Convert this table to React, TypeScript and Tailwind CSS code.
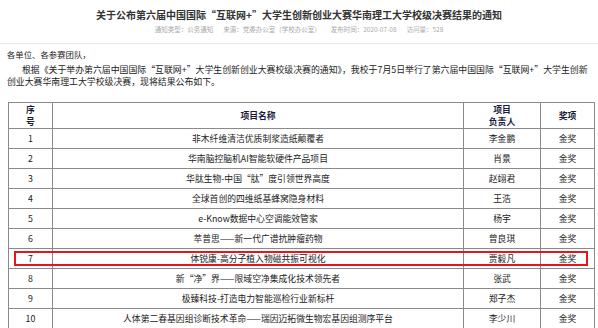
const rows = [
  { no: "1", name: "非木纤维清洁优质制浆造纸颠覆者", lead: "李金鹏", award: "金奖" },
  { no: "2", name: "华南脑控脑机AI智能软硬件产品项目", lead: "肖景", award: "金奖" },
  { no: "3", name: "华肽生物-中国“肽”度引领世界高度", lead: "赵翊君", award: "金奖" },
  { no: "4", name: "全球首创的四维纸基蜂窝隐身材料", lead: "王浩", award: "金奖" },
  { no: "5", name: "e-Know数据中心空调能效管家", lead: "杨宇", award: "金奖" },
  { no: "6", name: "萃普思——新一代广谱抗肿瘤药物", lead: "曾良琪", award: "金奖" },
  { no: "7", name: "体锐康-高分子植入物磁共振可视化", lead: "贾毅凡", award: "金奖" },
  { no: "8", name: "新“净”界——限域空净集成化技术领先者", lead: "张武", award: "金奖" },
  { no: "9", name: "极臻科技-打造电力智能巡检行业新标杆", lead: "郑子杰", award: "金奖" },
  { no: "10", name: "人体第二春基因组诊断技术革命——瑞因迈拓微生物宏基因组测序平台", lead: "李少川", award: "金奖" },
  { no: "11", name: "", lead: "", award: "" },
];

export default function App() {
  return (
    <div className="w-[598px] h-[328px] overflow-hidden bg-white font-['Noto_Sans_CJK_SC',sans-serif] text-[#333]">
      {/* title + meta */}
      <div className="pt-[8px] text-center">
        <h1 className="text-[10px] font-bold leading-[14px] text-[#333]">
          关于公布第六届中国国际“互联网+”大学生创新创业大赛华南理工大学校级决赛结果的通知
        </h1>
        <div className="mt-[2px] flex justify-center gap-[10px] text-[6.5px] leading-[10px] text-[#aaa]">
          <span>通知类型：公务通知</span>
          <span>来源：党委办公室（学校办公室）</span>
          <span>发布时间：2020-07-08</span>
          <span>访问量：528</span>
        </div>
      </div>
      <div className="mt-[9px] border-t border-[#e8e8e8]" />

      {/* body */}
      <div className="px-[7px] text-[#222]">
        <p className="mt-[4px] text-[8.4px] leading-[12px]">各单位、各参赛团队，</p>
        <p className="mt-[4px] text-[8.9px] leading-[12px] indent-[15px] whitespace-nowrap">
          根据《关于举办第六届中国国际“互联网+”大学生创新创业大赛校级决赛的通知》，我校于7月5日举行了第六届中国国际“互联网+”大学生创新
          <br />
          创业大赛华南理工大学校级决赛，现将结果公布如下。
        </p>
      </div>

      {/* results table */}
      <div className="relative mt-[14px] ml-[8px] w-[586px]">
        <table className="w-full table-fixed border-collapse text-[8.8px] text-[#222]">
          <colgroup>
            <col className="w-[44px]" />
            <col className="w-[411px]" />
            <col className="w-[77px]" />
            <col className="w-[54px]" />
          </colgroup>
          <thead>
            <tr className="h-[26px] font-bold text-[#1c1c3a] leading-[12px]">
              <th className="border border-[#8a8a8a] p-0 px-[14px]">序号</th>
              <th className="border border-[#8a8a8a] p-0">项目名称</th>
              <th className="border border-[#8a8a8a] p-0">
                项目
                <br />
                负责人
              </th>
              <th className="border border-[#8a8a8a] p-0">奖项</th>
            </tr>
          </thead>
          <tbody>
            {rows.map((r) => (
              <tr key={r.no} className="h-[20px] text-center leading-[12px]">
                <td className="border border-[#8a8a8a] p-0">{r.name ? r.no : ""}</td>
                <td className="border border-[#8a8a8a] p-0 whitespace-nowrap">{r.name}</td>
                <td className="border border-[#8a8a8a] p-0">{r.lead}</td>
                <td className="border border-[#8a8a8a] p-0">{r.award}</td>
              </tr>
            ))}
          </tbody>
        </table>
        {/* highlight on row 7 */}
        <div className="pointer-events-none absolute left-[6px] right-[6px] top-[149px] h-[15px] border-2 border-[#e8141b]" />
      </div>
    </div>
  );
}
